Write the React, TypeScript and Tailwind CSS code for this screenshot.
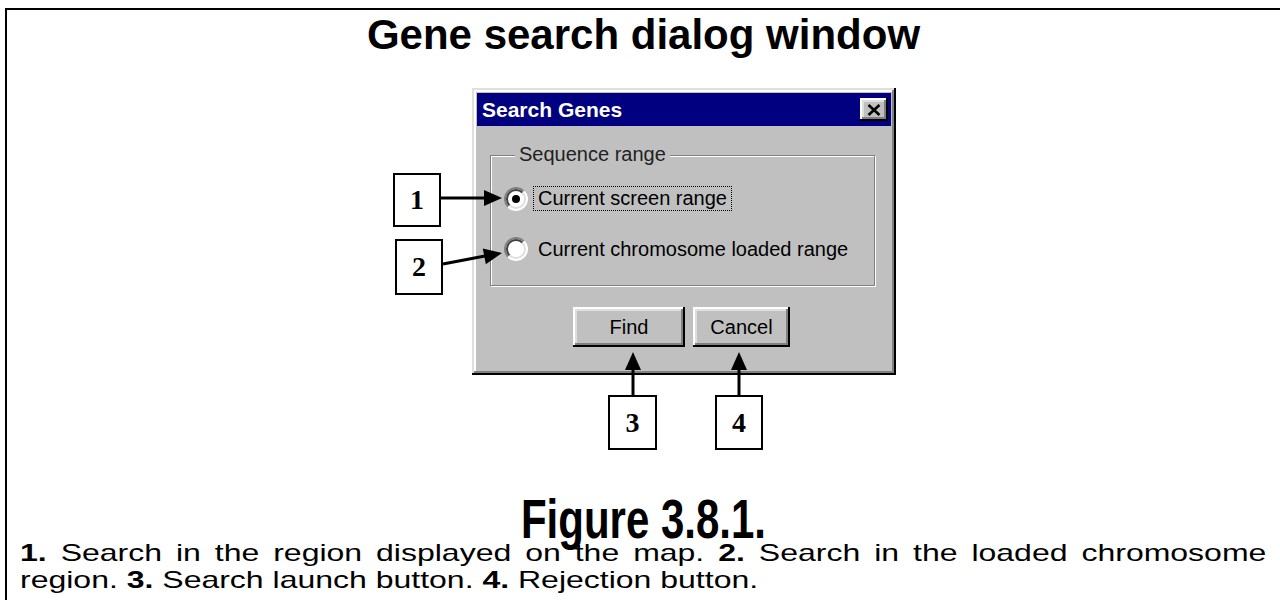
import React from 'react';

// Win95 style radio button drawn as a small svg
const Radio = ({ checked }: { checked?: boolean }) => (
  <svg width="24" height="24" viewBox="0 0 24 24" className="shrink-0">
    <circle cx="12" cy="12" r="11" fill="#fff" />
    <path d="M4.2 19.8 A11 11 0 0 1 19.8 4.2" stroke="#808080" strokeWidth="2" fill="none" />
    <path d="M19.8 4.2 A11 11 0 0 1 4.2 19.8" stroke="#ffffff" strokeWidth="2" fill="none" />
    <path d="M5.6 18.4 A9 9 0 0 1 18.4 5.6" stroke="#404040" strokeWidth="2" fill="none" />
    <path d="M18.4 5.6 A9 9 0 0 1 5.6 18.4" stroke="#dfdfdf" strokeWidth="2" fill="none" />
    {checked && <circle cx="12" cy="12" r="4" fill="#000" />}
  </svg>
);

const CalloutBox = ({ label, className }: { label: string; className: string }) => (
  <div
    className={
      'absolute flex items-center justify-center border-2 border-black bg-white font-["Liberation_Serif",serif] text-[28px] font-bold leading-none ' +
      className
    }
  >
    {label}
  </div>
);

const bevel =
  'shadow-[inset_-2px_-2px_0_#000,inset_2px_2px_0_#fff,inset_-4px_-4px_0_#808080,inset_4px_4px_0_#dfdfdf]';

const SearchGenesDialog = () => (
  <div className="ml-[80px] h-[287px] w-[424px] bg-[#c0c0c0] p-[5px] shadow-[inset_-2px_-2px_0_#000,inset_2px_2px_0_#dfdfdf,inset_-4px_-4px_0_#808080,inset_4px_4px_0_#fff]">
    <div className="flex h-[33px] items-center justify-between bg-[#000080] pl-[5px] pr-[3px]">
      <span className="text-[21px] font-bold leading-none text-white">Search Genes</span>
      <div className={'flex h-[23px] w-[28px] items-center justify-center bg-[#c0c0c0] ' + bevel}>
        <svg width="14" height="12" viewBox="0 0 14 12">
          <path d="M1.5 1 L12.5 11 M12.5 1 L1.5 11" stroke="#000" strokeWidth="2.6" />
        </svg>
      </div>
    </div>

    <div className="relative ml-[13px] mt-[29px] h-[131px] w-[385px] border border-[#808080] shadow-[1px_1px_0_#fff,inset_1px_1px_0_#fff]">
      <span className="absolute left-[24px] top-[-13px] bg-[#c0c0c0] px-[4px] text-[20px] leading-[22px] text-[#222]">
        Sequence range
      </span>
      <div className="flex flex-col gap-[26px] pl-[13px] pt-[30px] text-[20px] leading-[23px]">
        <div className="flex items-center">
          <Radio checked />
          <span className="ml-[5px] border border-dotted border-black px-[4px]">Current screen range</span>
        </div>
        <div className="flex items-center">
          <Radio />
          <span className="ml-[10px]">Current chromosome loaded range</span>
        </div>
      </div>
    </div>

    <div className="ml-[96px] mt-[21px] flex gap-[8px] text-[20px]">
      <div className={'flex h-[40px] w-[112px] items-center justify-center ' + bevel}>Find</div>
      <div className={'flex h-[40px] w-[97px] items-center justify-center ' + bevel}>Cancel</div>
    </div>
  </div>
);

export default function App() {
  return (
    <div className="h-[600px] w-[1280px] overflow-hidden bg-white pl-[5px] pt-[8px] font-['Liberation_Sans',Arial,sans-serif] text-black">
      <div className="flex h-full flex-col border-l-2 border-t-2 border-black">
        <h1 className="mt-[4px] text-center text-[42px] font-bold leading-[42px]">Gene search dialog window</h1>

        <div className="relative mx-auto mt-[32px] h-[362px] w-[503px] shrink-0">
          <SearchGenesDialog />

          <CalloutBox label="1" className="left-[1px] top-[85px] h-[54px] w-[48px]" />
          <CalloutBox label="2" className="left-[3px] top-[151px] h-[56px] w-[48px]" />
          <CalloutBox label="3" className="left-[216px] top-[307px] h-[55px] w-[49px]" />
          <CalloutBox label="4" className="left-[323px] top-[307px] h-[55px] w-[48px]" />

          <svg className="pointer-events-none absolute inset-0" width="503" height="362" viewBox="0 0 503 362">
            <g stroke="#000" strokeWidth="3" fill="none">
              <line x1="49" y1="110" x2="93" y2="110" />
              <line x1="51" y1="176" x2="93" y2="168" />
              <line x1="241" y1="307" x2="241" y2="280" />
              <line x1="347" y1="307" x2="347" y2="280" />
            </g>
            <g fill="#000">
              <polygon points="92,102 110,110 92,118" />
              <polygon points="93.8,176.2 110,165 90.8,160.4" />
              <polygon points="233,282 241,264 249,282" />
              <polygon points="339,282 347,264 355,282" />
            </g>
          </svg>
        </div>

        <h2 className="mt-[59px] origin-bottom scale-y-[1.3] text-center text-[42px] font-bold leading-[29px]">
          Figure 3.8.1.
        </h2>

        <div className="mt-[1px] pl-[13px]">
          <p className="w-[935px] origin-left scale-x-[1.333] text-justify text-[24px] leading-[27px]">
            <b>1.</b> Search in the region displayed on the map. <b>2.</b> Search in the loaded chromosome region.{' '}
            <b>3.</b> Search launch button. <b>4.</b> Rejection button.
          </p>
        </div>
      </div>
    </div>
  );
}
